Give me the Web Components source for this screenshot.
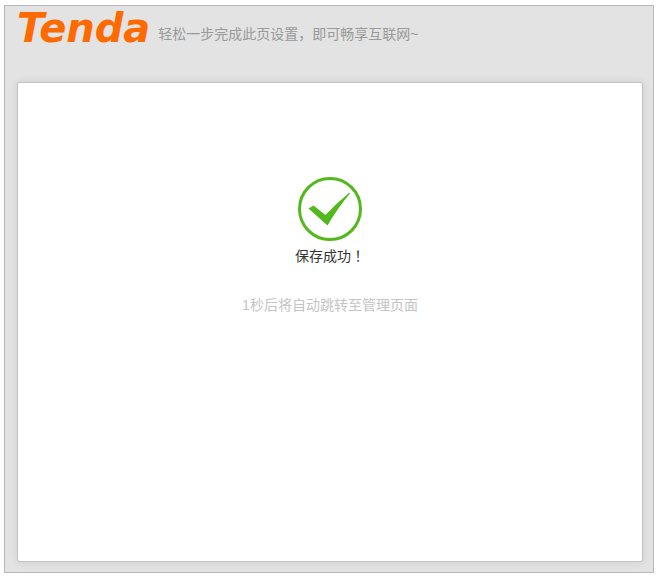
<!DOCTYPE html>
<html lang="zh-CN">
<head>
<meta charset="utf-8">
<meta name="viewport" content="width=device-width, initial-scale=1">
<title>Tenda</title>
<style>
  body {
    margin: 0;
    background: #fff;
    font: 14px/20px "Liberation Sans", "Noto Sans CJK SC", sans-serif;
  }
</style>
</head>
<body>
<setup-page>
  <setup-header slot="header" brand="Tenda">轻松一步完成此页设置，即可畅享互联网~</setup-header>
  <save-result>
    保存成功<span lang="zh-TW">！</span>
    <span slot="hint">1秒后将自动跳转至管理页面</span>
  </save-result>
</setup-page>

<script>
class SetupPage extends HTMLElement {
  constructor() {
    super();
    this.attachShadow({ mode: 'open' });
  }

  connectedCallback() {
    this.shadowRoot.innerHTML = `
      <style>
        :host {
          display: flex;
          flex-direction: column;
          box-sizing: border-box;
          min-height: 100vh;
          padding: 5px 4px 7px;
        }
        .frame {
          flex: 1;
          display: flex;
          flex-direction: column;
          padding: 0 10px 10px 12px;
          border: 1px solid #b8b8b8;
          background: #e3e3e3;
        }
        main {
          flex: 1;
          border: 1px solid #c2c2c2;
          border-radius: 2px;
          background: #fff;
          box-shadow: 0 0 8px rgba(0, 0, 0, 0.1);
        }
      </style>
      <div class="frame">
        <slot name="header"></slot>
        <main><slot></slot></main>
      </div>
    `;
  }
}

class SetupHeader extends HTMLElement {
  constructor() {
    super();
    this.attachShadow({ mode: 'open' });
  }

  connectedCallback() {
    const brand = this.getAttribute('brand') || '';

    this.shadowRoot.innerHTML = `
      <style>
        :host {
          display: block;
          padding-bottom: 32px;
          color: #999;
        }
        header {
          display: flex;
          align-items: flex-start;
          gap: 8px;
        }
        .brand {
          font: italic bold 40px/44px "DejaVu Sans", sans-serif;
          color: #ff6a00;
        }
        .tagline {
          padding-top: 18px;
        }
      </style>
      <header>
        <span class="brand">${brand}</span>
        <span class="tagline"><slot></slot></span>
      </header>
    `;
  }
}

class SaveResult extends HTMLElement {
  constructor() {
    super();
    this.attachShadow({ mode: 'open' });
  }

  connectedCallback() {
    this.shadowRoot.innerHTML = `
      <style>
        :host {
          display: flex;
          flex-direction: column;
          align-items: center;
          padding: 94px 16px 40px;
          text-align: center;
          color: #333;
        }
        svg {
          display: block;
          width: 64px;
          height: 64px;
        }
        p {
          margin: 0;
        }
        .message {
          margin-top: 5px;
        }
        .hint {
          margin-top: 29px;
          color: #c4c4c4;
        }
      </style>
      <svg viewBox="0 0 64 64" aria-hidden="true">
        <circle cx="32" cy="32" r="30.5" fill="none" stroke="#52b81c" stroke-width="3"/>
        <path fill="#52b81c" d="M10.5 31.5 L15.5 28.5 L27.5 38 Q38 26.5 51.5 15.5 L52 16.5 Q40 30.5 29.5 48.5 Z"/>
      </svg>
      <p class="message"><slot></slot></p>
      <p class="hint"><slot name="hint"></slot></p>
    `;
  }
}

customElements.define('setup-page', SetupPage);
customElements.define('setup-header', SetupHeader);
customElements.define('save-result', SaveResult);
</script>
</body>
</html>
